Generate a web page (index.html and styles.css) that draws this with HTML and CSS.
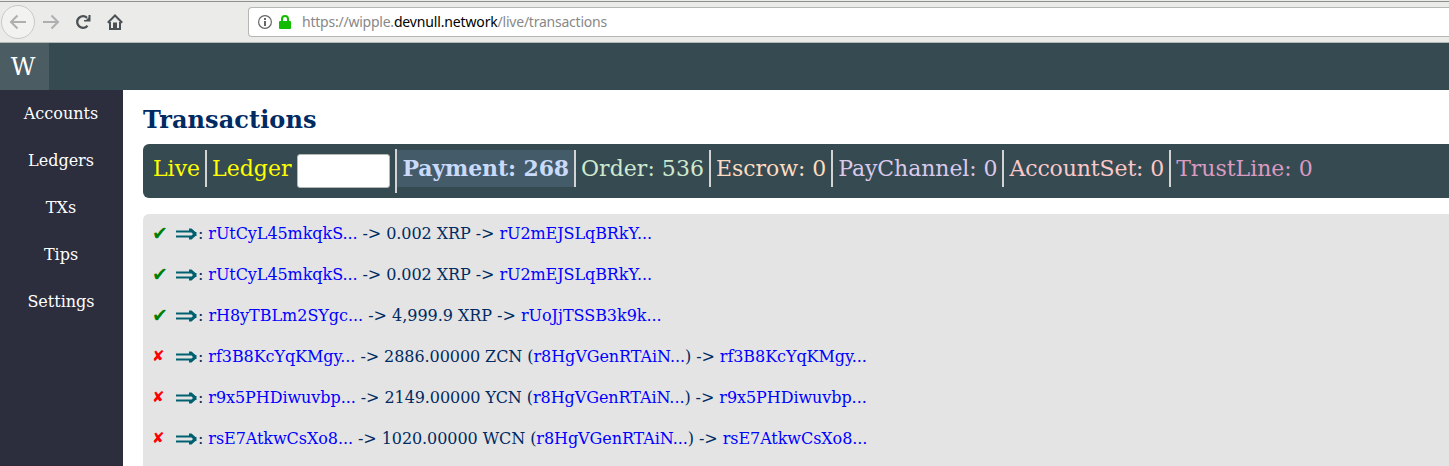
FILE: index.html
```html
<!DOCTYPE html>
<html lang="en">
<head>
<meta charset="utf-8">
<title>Transactions</title>
<link rel="stylesheet" href="styles.css">
</head>
<body>
<svg class="defs" width="0" height="0">
  <symbol id="arrow" viewBox="0 0 21 12"><path d="M0 2.500h13V.5h2.500l4 3.500h1v4h-1l-4 3.500H13v-2H0v-2h15.500L17 6l-1.500-1.500H0z" fill="#006070"/></symbol>
</svg>
<header class="browser">
  <div class="nav-buttons">
    <span class="back"><svg width="18" height="16" viewBox="0 0 18 16"><path d="M17 8H3M8.500 1.500 2 8l6.500 6.500" /></svg></span>
    <svg class="forward" width="18" height="16" viewBox="0 0 18 16"><path d="M1 8h14M9.500 1.500 16 8l-6.500 6.500"/></svg>
    <svg class="reload" width="16" height="16" viewBox="0 0 16 16"><path d="M12.500 11.700A5.800 5.800 0 1 1 12 3.800" fill="none" stroke="#4b5154" stroke-width="2.300"/><path d="M15.500 1v6.500H9V6h2l2.500-2.500V1z" fill="#4b5154"/></svg>
    <svg class="home" width="16" height="16" viewBox="0 0 16 16"><path d="M.8 8.700 8 1.500l7.200 7.200M3 8v7h10V8" fill="none" stroke="#4b5154" stroke-width="2"/><path d="M6 8.500h4V14H6z" fill="#4b5154"/></svg>
  </div>
  <div class="address">
    <svg class="info" width="14" height="14" viewBox="0 0 14 14"><circle cx="7" cy="7" r="6.400" fill="none" stroke="#666" stroke-width="1.200"/><path d="M6 3h2v2H6zM6 6h2v5H6z" fill="#666"/></svg>
    <svg class="lock" width="12" height="14" viewBox="0 0 12 14"><path d="M3 7V4a3 3 0 0 1 6 0v3" fill="none" stroke="#12bc00" stroke-width="2"/><rect y="6" width="12" height="8" rx="1" fill="#12bc00"/></svg>
    <span class="url">https://wipple.<b>devnull.network</b>/live/transactions</span>
  </div>
</header>
<div class="topbar"><span class="logo">W</span></div>
<div class="layout">
  <nav class="sidebar"><a>Accounts</a><a>Ledgers</a><a>TXs</a><a>Tips</a><a>Settings</a></nav>
  <main>
    <h1>Transactions</h1>
    <div class="filters">
      <span class="item live">Live</span>
      <span class="item ledger">Ledger <input type="text" aria-label="Ledger"></span>
      <span class="item payment">Payment: 268</span>
      <span class="item order">Order: 536</span>
      <span class="item escrow">Escrow: 0</span>
      <span class="item channel">PayChannel: 0</span>
      <span class="item account">AccountSet: 0</span>
      <span class="item trust">TrustLine: 0</span>
    </div>
    <div class="list">
      <div class="tx"><span class="mark ok">✔</span><svg class="arrow"><use href="#arrow"/></svg><span>: <a>rUtCyL45mkqkS...</a> -&gt; 0.002 XRP -&gt; <a>rU2mEJSLqBRkY...</a></span></div>
      <div class="tx"><span class="mark ok">✔</span><svg class="arrow"><use href="#arrow"/></svg><span>: <a>rUtCyL45mkqkS...</a> -&gt; 0.002 XRP -&gt; <a>rU2mEJSLqBRkY...</a></span></div>
      <div class="tx wide"><span class="mark ok">✔</span><svg class="arrow"><use href="#arrow"/></svg><span>: <a>rH8yTBLm2SYgc...</a> -&gt; 4,999.9 XRP -&gt; <a>rUoJjTSSB3k9k...</a></span></div>
      <div class="tx"><span class="mark bad">✘</span><svg class="arrow"><use href="#arrow"/></svg><span>: <a>rf3B8KcYqKMgy...</a> -&gt; 2886.00000 ZCN (<a>r8HgVGenRTAiN...</a>) -&gt; <a>rf3B8KcYqKMgy...</a></span></div>
      <div class="tx"><span class="mark bad">✘</span><svg class="arrow"><use href="#arrow"/></svg><span>: <a>r9x5PHDiwuvbp...</a> -&gt; 2149.00000 YCN (<a>r8HgVGenRTAiN...</a>) -&gt; <a>r9x5PHDiwuvbp...</a></span></div>
      <div class="tx"><span class="mark bad">✘</span><svg class="arrow"><use href="#arrow"/></svg><span>: <a>rsE7AtkwCsXo8...</a> -&gt; 1020.00000 WCN (<a>r8HgVGenRTAiN...</a>) -&gt; <a>rsE7AtkwCsXo8...</a></span></div>
    </div>
  </main>
</div>
</body>
</html>
```
FILE: styles.css
```css
* { box-sizing: border-box; }
body { margin: 0; height: 466px; overflow: hidden; background: #fff; color: #002a62; font: 16px/19px "DejaVu Serif", serif; }
.defs { display: block; }
.browser { height: 43px; display: flex; background: #ebebe9; border-bottom: 1px solid #b4b8b3; box-shadow: inset 0 1px #ebebe9, inset 0 2px #8d918c; padding-top: 7px; }
.nav-buttons { width: 248px; height: 30px; display: flex; align-items: center; padding-left: 1px; flex: none; }
.back { width: 34px; height: 34px; flex: none; border: 1px solid #c9c9c7; border-radius: 50%; background: #f2f2f1; display: flex; align-items: center; justify-content: center; }
.back path, .forward path { fill: none; stroke: #aeb0b0; stroke-width: 2; }
.forward { margin-left: 7px; }
.reload { margin-left: 15px; }
.home { margin-left: 16px; }
.address { flex: 1; height: 30px; background: #fff; border: 1px solid #b4b8b3; border-right: 0; border-radius: 4px 0 0 4px; display: flex; align-items: center; padding-left: 9px; }
.lock { margin-left: 7px; }
.url { margin-left: 11px; font: 14px/20px "Noto Sans", sans-serif; letter-spacing: -0.23px; color: #888; white-space: nowrap; }
.url b { font-weight: 400; color: #000; letter-spacing: -0.15px; }
.topbar { height: 47px; background: #364a52; }
.logo { display: flex; width: 49px; height: 47px; align-items: center; justify-content: center; background: #4b5c63; color: #fff; font-size: 24px; padding: 2px 3px 0 0; }
.layout { display: flex; height: 376px; }
.sidebar { width: 123px; flex: none; background: #2c2e3e; border-bottom: 1px solid #33283a; color: #fff; display: flex; flex-direction: column; align-items: center; gap: 28px; padding: 14px 1px 0 0; }
main { flex: 1; min-width: 0; padding-left: 20px; }
h1 { margin: 15px 0 10px; font-size: 24px; line-height: 29px; letter-spacing: 0.08px; }
.filters { height: 54px; background: #364a52; border-radius: 6px 0 0 6px; display: flex; align-items: flex-start; padding: 6px 0 0 5px; font-size: 22px; line-height: 37px; }
.item { height: 37px; padding: 0 5px; border-right: 2px solid #d3d3d3; white-space: nowrap; }
.item:last-child { border-right: 0; }
.live, .ledger { color: #ff0; }
.ledger { display: flex; height: 44px; margin-top: -1px; padding-top: 1px; }
.ledger input { width: 93px; height: 34px; margin: 4px 0 0 6px; border: 1px solid #b4b8b3; border-radius: 3px; background: #fff; }
.payment { background: #445c6a; color: #c9dafb; font-weight: bold; letter-spacing: -0.13px; }
.order { color: #cfe9cf; letter-spacing: 0.04px; }
.escrow { color: #fcdcc0; letter-spacing: -0.05px; }
.channel { color: #d9c9ea; letter-spacing: -0.08px; }
.account { color: #fac8c8; letter-spacing: -0.12px; }
.trust { color: #db9abf; letter-spacing: -0.02px; }
.list { margin-top: 16px; height: 260px; background: #e4e4e4; border-radius: 6px 0 0 0; padding: 10px; display: flex; flex-direction: column; gap: 22px; }
.tx { display: flex; height: 19px; flex: none; white-space: nowrap; letter-spacing: -0.07px; }
.wide { letter-spacing: -0.03px; }
.tx a { color: #00f; }
.mark { width: 24px; margin-left: -1px; font-family: "DejaVu Sans", sans-serif; }
.ok { color: green; font-size: 19px; }
.bad { color: red; font-size: 15px; }
.arrow { width: 21px; height: 12px; margin: 4px 1px 0 0; }
```
